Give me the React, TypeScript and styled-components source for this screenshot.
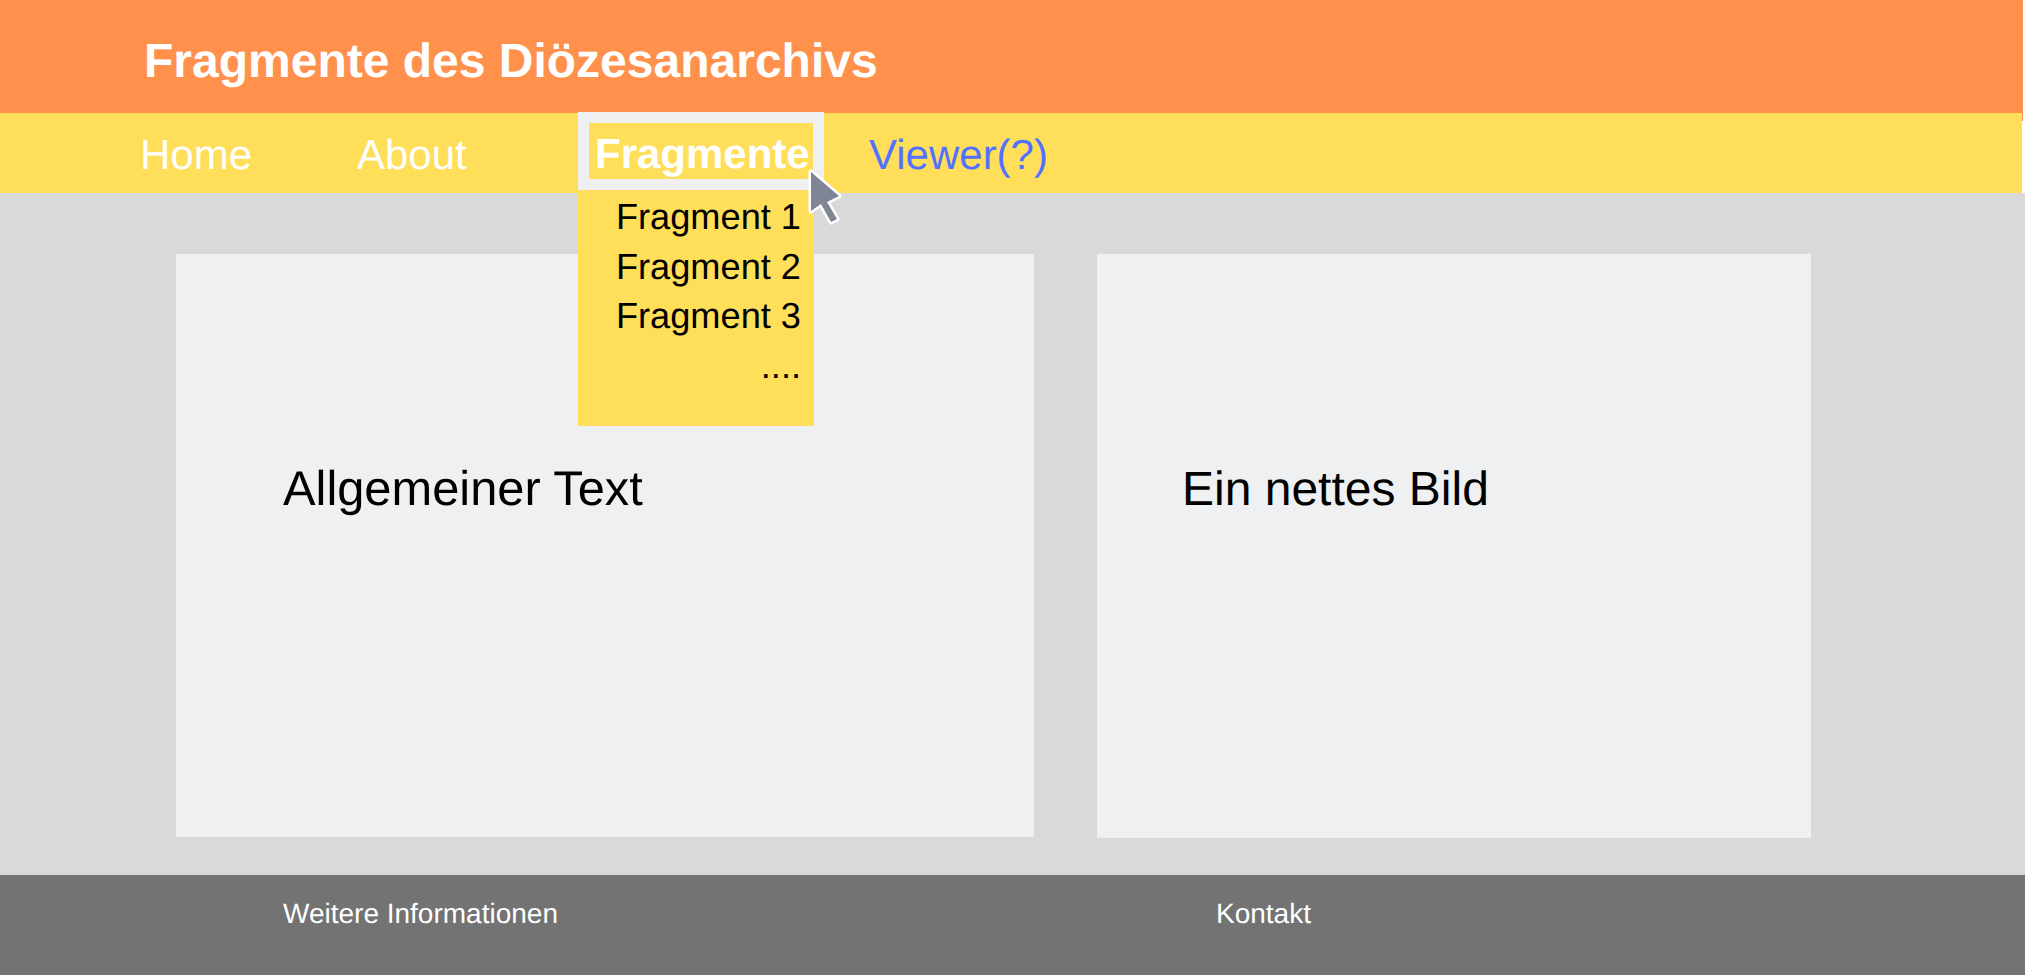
import React from "react";
import styled, { createGlobalStyle } from "styled-components";

const GlobalStyle = createGlobalStyle`
  html, body {
    margin: 0;
    padding: 0;
    background: #fff;
    font-family: "Liberation Sans", Arial, sans-serif;
    text-rendering: geometricPrecision;
  }
`;

const Page = styled.div`
  width: 2025px;
  height: 975px;
  display: flex;
  flex-direction: column;
  overflow: hidden;
`;

const Header = styled.header`
  position: relative;
  width: 2023px;
  height: 113px;
  flex: none;
  background: #ff914d;
  display: flex;
  align-items: center;
  padding: 9px 0 0 144px;
  box-sizing: border-box;

  &::after {
    content: "";
    position: absolute;
    right: 0;
    top: 100%;
    width: 1px;
    height: 8px;
    background: #ff914d;
  }
`;

const Title = styled.h1`
  margin: 0;
  color: #fff;
  font-size: 48px;
  font-weight: 700;
`;

const Nav = styled.nav`
  position: relative;
  width: 2022px;
  height: 80px;
  flex: none;
  background: #ffde59;
  display: flex;
  align-items: center;
  padding: 4px 0 0 140px;
  box-sizing: border-box;
  font-size: 42px;
`;

const NavLink = styled.a<{ $width: number; $color?: string }>`
  width: ${(p) => p.$width}px;
  color: ${(p) => p.$color || "#fff"};
`;

const ActiveItem = styled.div`
  position: relative;
  width: 291px;
  height: 100%;
`;

const ActiveBox = styled.div`
  position: absolute;
  left: 0;
  top: -5px;
  width: 246px;
  height: 78px;
  box-sizing: border-box;
  border: 11px solid #eef0f2;
  display: flex;
  align-items: center;
  padding: 6px 0 0 6px;
  color: #fff;
  font-weight: 700;
  z-index: 2;
`;

const Dropdown = styled.div`
  position: absolute;
  left: 0;
  top: 66px;
  width: 236px;
  height: 243px;
  box-sizing: border-box;
  background: #ffde59;
  padding: 9px 13px 0 0;
  text-align: right;
  color: #000;
  font-size: 36.2px;
  line-height: 49.6px;
  z-index: 1;
`;

const Cursor = styled.svg`
  position: absolute;
  left: 229px;
  top: 49px;
  width: 40px;
  height: 60px;
  z-index: 3;
`;

const Main = styled.main`
  flex: 1;
  background: #d9d9d9;
  display: flex;
  gap: 63px;
  padding: 61px 0 0 176px;
  box-sizing: border-box;
`;

const Card = styled.section<{ $width: number; $height: number; $inset: number; $size: number; $top: number }>`
  width: ${(p) => p.$width}px;
  height: ${(p) => p.$height}px;
  box-sizing: border-box;
  background: #eff0f2;
  padding: ${(p) => p.$top}px 0 0 ${(p) => p.$inset}px;
  font-size: ${(p) => p.$size}px;
  color: #000;
`;

const Footer = styled.footer`
  height: 100px;
  flex: none;
  background: #737373;
  color: #fff;
  font-size: 28px;
  display: flex;
  padding: 23px 0 0 283px;
  box-sizing: border-box;
`;

const FooterItem = styled.div`
  width: 933px;
`;

export default function App() {
  return (
    <Page>
      <GlobalStyle />
      <Header>
        <Title>Fragmente des Diözesanarchivs</Title>
      </Header>
      <Nav>
        <NavLink $width={217}>Home</NavLink>
        <NavLink $width={221}>About</NavLink>
        <ActiveItem>
          <ActiveBox>Fragmente</ActiveBox>
          <Dropdown>
            <div>Fragment 1</div>
            <div>Fragment 2</div>
            <div>Fragment 3</div>
            <div>....</div>
          </Dropdown>
          <Cursor viewBox="0 0 40 60">
            <path
              d="M4 6 L32 30 L20 36 L30 53 L24 56 L14 38 L4 45 Z"
              fill="#7f8595"
              stroke="#fff"
              strokeWidth="5"
              strokeLinejoin="round"
              paintOrder="stroke"
            />
          </Cursor>
        </ActiveItem>
        <NavLink $width={300} $color="#5271ff">Viewer(?)</NavLink>
      </Nav>
      <Main>
        <Card $width={858} $height={583} $inset={107} $size={48.8} $top={207}>Allgemeiner Text</Card>
        <Card $width={714} $height={584} $inset={85} $size={48} $top={208}>Ein nettes Bild</Card>
      </Main>
      <Footer>
        <FooterItem>Weitere Informationen</FooterItem>
        <div>Kontakt</div>
      </Footer>
    </Page>
  );
}
